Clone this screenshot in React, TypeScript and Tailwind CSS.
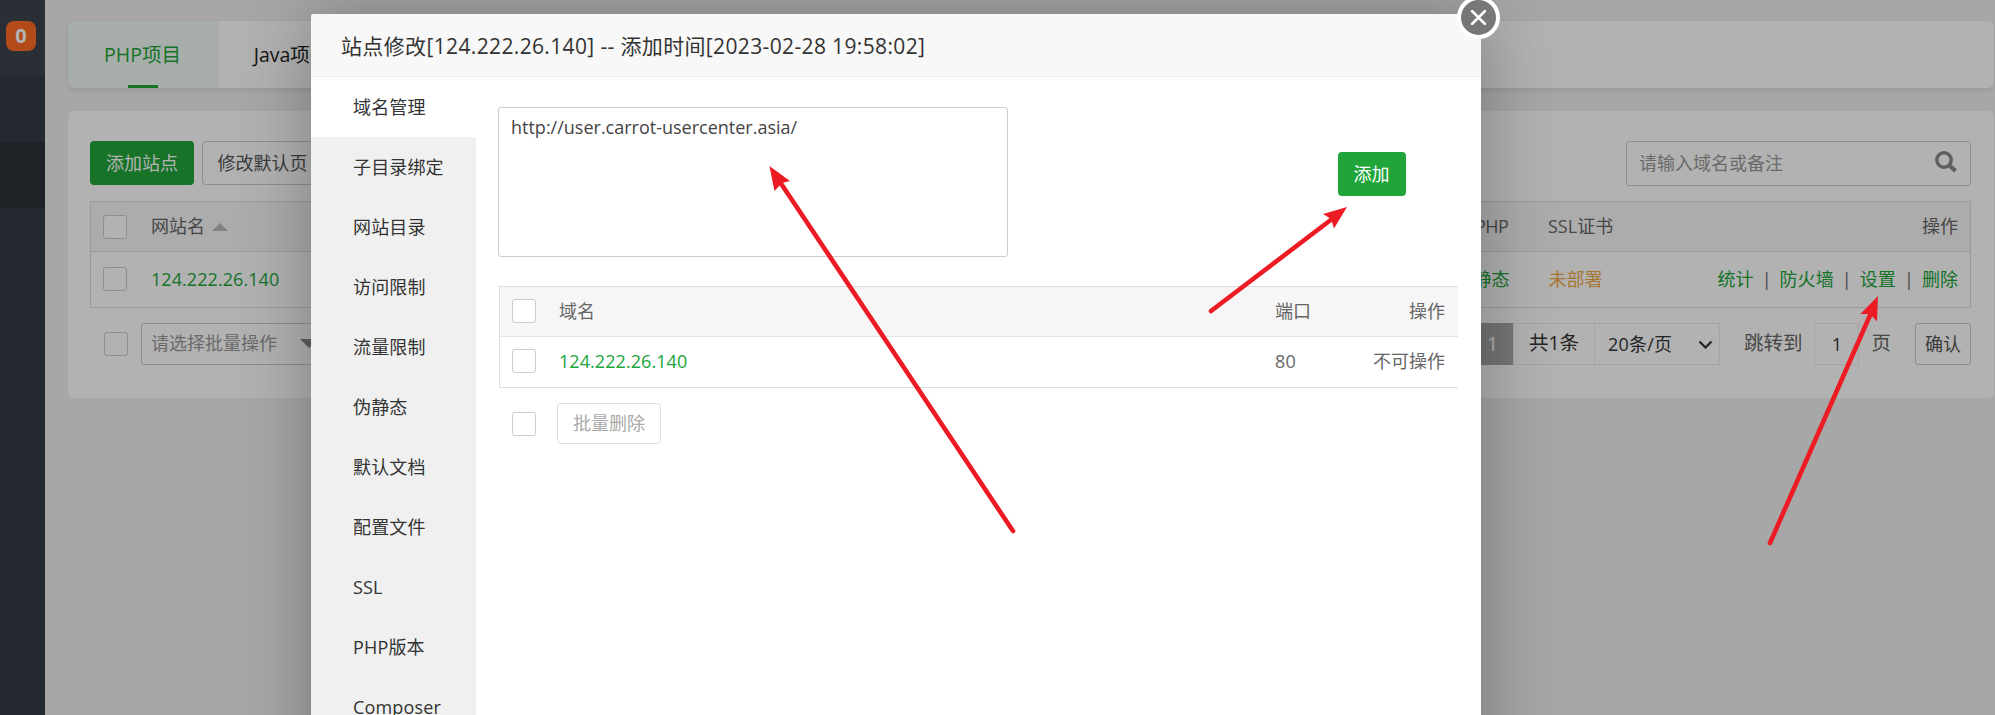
import type { ReactNode } from 'react';

const FONT = "font-['Open_Sans','Noto_Sans_CJK_SC',sans-serif]";

const NAV = ['域名管理', '子目录绑定', '网站目录', '访问限制', '流量限制', '伪静态', '默认文档', '配置文件', 'SSL', 'PHP版本', 'Composer'];

function Check({ className = '' }: { className?: string }) {
  return <span className={`block size-6 shrink-0 rounded-[3px] border border-[#ccc] bg-white ${className}`} />;
}

function Link({ children }: { children: ReactNode }) {
  return <a className="tracking-[0.06px] text-[#20a53a]">{children}</a>;
}

function Separator() {
  return <span className="flex w-1 justify-center">|</span>;
}

function Sidebar() {
  return (
    <aside className="flex h-full w-[45px] shrink-0 flex-col bg-[#353d48]">
      <div className="flex h-[75px] shrink-0 justify-center bg-[#3c444d] pt-[21px]">
        <span className="mr-[3px] flex h-[30px] w-[30px] items-center justify-center rounded-[8px] bg-[#ff6c24] pb-px text-[20px] font-bold text-white">0</span>
      </div>
      <div className="h-[67px] shrink-0" />
      <div className="h-[66px] shrink-0 bg-[#2c3138]" />
    </aside>
  );
}

function Tabs() {
  return (
    <div className="flex h-[67px] shrink-0 overflow-hidden rounded-md bg-white text-[19.5px] shadow-[0_2px_5px_rgba(0,0,0,0.1)]">
      <div className="flex w-[150px] flex-col items-center bg-[#f0f9f2] text-[#20a53a]">
        <span className="flex h-16 items-center pt-[3px] pr-px">PHP项目</span>
        <span className="h-[3px] w-[30px] bg-[#20a53a]" />
      </div>
      <div className="flex h-16 w-[150px] items-center justify-center pt-[3px] pr-[3px] text-[#222]">Java项目</div>
    </div>
  );
}

function SitePanel() {
  return (
    <section className="mt-[23px] flex h-[287px] shrink-0 flex-col rounded-md bg-white pt-[30px] pr-[23px] pl-[22px] text-[18px]">
      <div className="flex h-[45px] shrink-0 justify-between">
        <div className="flex h-11 gap-2">
          <button className="flex w-[104px] items-center justify-center rounded bg-[#20a53a] pt-px text-white">添加站点</button>
          <button className="flex w-[122px] items-center justify-center rounded border border-[#ccc] pt-px pr-px text-[#555]">修改默认页</button>
        </div>
        <div className="flex w-[345px] items-center justify-between rounded-[3px] border border-[#ccc] pr-3 pl-[12px] text-[#999]">
          <span>请输入域名或备注</span>
          <svg width="24" height="24" viewBox="0 0 24 24" fill="none" stroke="#888" className="mb-1">
            <circle cx="10" cy="10" r="7.2" strokeWidth="3.4" />
            <path d="M15.5 15.5 21.5 21" strokeWidth="4.2" />
          </svg>
        </div>
      </div>
      <div className="mt-[15px] flex h-[107px] shrink-0 flex-col border border-[#ddd] text-[#666]">
        <div className="flex h-[50px] items-center border-b border-[#ddd] bg-[#f6f6f6] pr-3 pl-3">
          <Check />
          <span className="ml-6">网站名</span>
          <span className="ml-[7px] border-x-[8px] border-b-[8px] border-x-transparent border-b-[#bbb]" />
          <span className="ml-auto w-[73px] tracking-[-0.5px]">PHP</span>
          <span className="w-[374px]">SSL证书</span>
          <span>操作</span>
        </div>
        <div className="flex flex-1 items-center pr-3 pb-px pl-3">
          <Check />
          <span className="ml-6"><Link>124.222.26.140</Link></span>
          <span className="ml-auto w-[75px]"><Link>静态</Link></span>
          <span className="w-[169px] text-[#f0ad4e]">未部署</span>
          <div className="flex gap-[11px]">
            <Link>统计</Link><Separator />
            <Link>防火墙</Link><Separator />
            <Link>设置</Link><Separator />
            <Link>删除</Link>
          </div>
        </div>
      </div>
      <div className="mt-[15px] flex h-[42px] shrink-0 items-center">
        <Check className="ml-[14px]" />
        <div className="ml-[13px] flex h-full w-[190px] items-center justify-between rounded-[3px] border border-[#ccc] pr-3 pb-px pl-[9px] text-[#999]">
          请选择批量操作
          <span className="ml-auto border-x-[9px] border-t-[9px] border-x-transparent border-t-[#888]" />
        </div>
        <div className="ml-auto flex h-full text-[19.5px] text-[#333]">
          <span className="flex w-[41px] items-center justify-center bg-[#aaa] text-white">1</span>
          <span className="flex w-[82px] items-center justify-center border border-[#ececec] pb-[3px]">共1条</span>
          <span className="flex w-[125px] items-center justify-between border border-l-0 border-[#ececec] pr-[6px] pl-[13px] text-[18px] tracking-[0.2px]">
            20条/页
            <svg width="15" height="9" viewBox="0 0 15 9" fill="none" stroke="#333" strokeWidth="2.2"><path d="m1.5 1.5 6 6 6-6" /></svg>
          </span>
        </div>
        <span className="ml-6 pb-[3px] text-[19.5px] text-[#666]">跳转到</span>
        <span className="ml-[12px] flex h-full w-[45px] items-center justify-center border border-[#ececec] text-[#333]">1</span>
        <span className="ml-[12px] pb-[3px] text-[19.5px] text-[#666]">页</span>
        <button className="ml-6 flex h-full w-14 items-center justify-center rounded-[3px] border border-[#ccc] text-[#555]">确认</button>
      </div>
    </section>
  );
}

function SiteDialog() {
  return (
    <div className="absolute top-[14px] left-[311px] flex h-[800px] w-[1170px] flex-col rounded-[3px] bg-white shadow-[1px_1px_75px_rgba(0,0,0,0.3)]">
      <header className="flex h-[63px] shrink-0 items-center rounded-t-[3px] border-b border-[#eee] bg-[#f8f8f8] pt-[3px] pl-[30px] text-[21px] tracking-[0.36px] whitespace-pre text-[#333]">
        站点修改[124.222.26.140] -- 添加时间[2023-02-28 19:58:02]
      </header>
      <div className="flex flex-1 text-[18px]">
        <nav className="w-[165px] shrink-0 bg-[#f0f0f0] text-[#333]">
          {NAV.map((item, i) => (
            <div key={item} className={`flex h-[60px] items-center pl-[42px] tracking-[0.15px] ${i === 0 ? 'bg-white' : ''}`}>{item}</div>
          ))}
        </nav>
        <main className="flex flex-1 flex-col pt-[30px] pl-[22px]">
          <div className="flex h-[150px]">
            <div className="w-[510px] rounded-[3px] border border-[#ccc] pt-[6px] pl-3 text-[#444]">http://user.carrot-usercenter.asia/</div>
            <button className="mt-[45px] ml-[330px] flex h-11 w-[68px] items-center justify-center rounded bg-[#20a53a] pt-px pr-px text-white">添加</button>
          </div>
          <div className="mt-[29px] mr-[23px] ml-px flex h-[102px] flex-col border border-r-0 border-[#ddd] text-[#666]">
            <div className="flex h-[50px] items-center border-b border-[#e4e4e4] bg-[#f6f6f6] pr-[13px] pb-px pl-3">
              <Check />
              <span className="ml-[23px]">域名</span>
              <span className="ml-auto w-[134px]">端口</span>
              <span>操作</span>
            </div>
            <div className="flex flex-1 items-center pr-[13px] pb-[2px] pl-3">
              <Check />
              <span className="ml-[23px]"><Link>124.222.26.140</Link></span>
              <span className="ml-auto w-[98px] tracking-[0.2px]">80</span>
              <span>不可操作</span>
            </div>
          </div>
          <div className="mt-[15px] flex h-[41px] items-center pl-[14px]">
            <Check />
            <button className="ml-[21px] flex h-full w-[104px] items-center justify-center rounded border border-[#ddd] text-[#aaa]">批量删除</button>
          </div>
        </main>
      </div>
      <button className="absolute top-[-18px] right-[-19px] flex size-[43px] items-center justify-center rounded-full border-4 border-white bg-[#777]">
        <svg width="17" height="17" viewBox="0 0 16 16" stroke="#fff" strokeWidth="2.6" strokeLinecap="round"><path d="m2 2 12 12M14 2 2 14" /></svg>
      </button>
    </div>
  );
}

function Pointers() {
  return (
    <svg className="pointer-events-none absolute inset-0" width="1995" height="715" viewBox="0 0 1995 715" fill="#ed1c24" stroke="#ed1c24">
      <g strokeWidth="4.6" strokeLinecap="round">
        <path d="M1013 531 780 182" />
        <path d="M1211 311 1332 219" />
        <path d="m1770 543 101-230" />
      </g>
      <g stroke="none">
        <path d="M769.4 166 790 181 782 183 774.5 191Z" />
        <path d="M1347 207 1323 214 1331 219 1334 228.5Z" />
        <path d="M1878 296 1860.3 314 1870 314 1877 321.5Z" />
      </g>
    </svg>
  );
}

export default function App() {
  return (
    <div className={`relative h-[715px] w-[1995px] overflow-hidden bg-[#f0f0f0] ${FONT}`}>
      <div className="flex h-full">
        <Sidebar />
        <div className="flex flex-1 flex-col pt-[21px] pr-px pl-[23px]">
          <Tabs />
          <SitePanel />
        </div>
      </div>
      <div className="absolute inset-0 bg-black/30" />
      <SiteDialog />
      <Pointers />
    </div>
  );
}
